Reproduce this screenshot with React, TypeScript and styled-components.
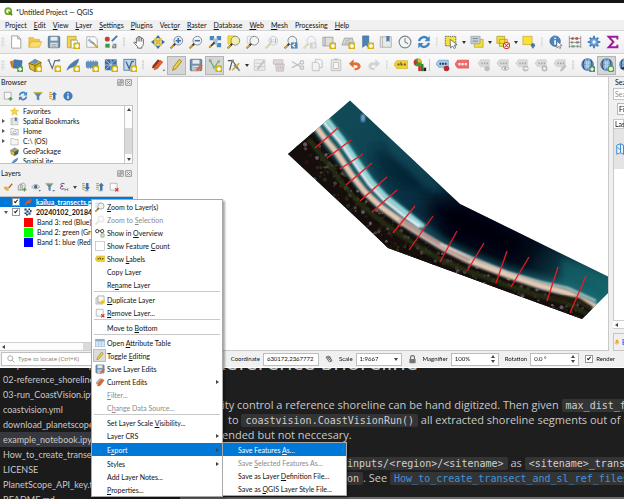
import React from 'react';
import styled, { createGlobalStyle, css } from 'styled-components';

const GlobalStyle = createGlobalStyle`
  *, *::before, *::after { box-sizing: border-box; }
  body { margin: 0; background: #1e1e1e; }
  button, input, select { font: inherit; color: inherit; margin: 0; }
`;

const ui = '"Lato", "Open Sans", sans-serif';
const prose = '"Open Sans", "Noto Sans", sans-serif';
const mono = '"DejaVu Sans Mono", monospace';

/* ---------- icons ---------- */

const Plus = ({ x = 9, y = 9 }: { x?: number; y?: number }) => (
  <g>
    <rect x={x} y={y} width="7" height="7" rx="1" fill="#e3c51c" stroke="#b2920c" strokeWidth=".7" />
    <path d={`M${x + 3.5} ${y + 1.2}v4.6M${x + 1.2} ${y + 3.5}h4.6`} stroke="#fff" strokeWidth="1.7" />
  </g>
);
const Lens = ({ fill = '#eef3f5', stroke = '#7a8288', handle = '#3a3325' }) => (
  <g>
    <path d="M6 10L1.500 14.500" stroke={handle} strokeWidth="2.200" strokeLinecap="round" />
    <path d="M3.500 12.500L1.500 14.500" stroke="#dcae2a" strokeWidth="2" strokeLinecap="round" />
    <circle cx="9.500" cy="6.500" r="5" fill={fill} stroke={stroke} strokeWidth="1" />
  </g>
);
const GreyTag = ({ children }: { children?: React.ReactNode }) => (
  <g>
    <path d="M1 6l3-4h10v8H4z" fill="#dadad8" stroke="#c6c6c4" strokeWidth=".6" />
    <path d="M5 6h1.600M8 6h1.600M11 6h1.600" stroke="#a4a4a4" strokeWidth="2" />
    {children}
  </g>
);
const Globe = () => (
  <g>
    <circle cx="7.500" cy="7.500" r="6.700" fill="#7fb0de" stroke="#3d6ea5" strokeWidth=".9" />
    <path d="M4 1.800Q1 7.500 4 13.200M11 1.800Q14 7.500 11 13.200" stroke="#3c4f66" fill="none" strokeWidth="1.300" />
    <path d="M7.500 1v13M1 7.500h13" stroke="#587fa8" fill="none" strokeWidth=".7" />
    <path d="M5.500 3.500h4v8h-4z" fill="#d9e6f2" opacity=".6" />
  </g>
);
const Pencil = ({ c = '#f0d338', e = '#8c7a20' }) => (
  <path d="M3 14l1-3.800L10.500 1.800l2.800 1.900-6.600 8.500z" fill={c} stroke={e} strokeWidth=".9" />
);
const Floppy = () => (
  <g>
    <rect x="1.500" y="1.500" width="13" height="13" rx="1.200" fill="#6f93b8" stroke="#4b6985" />
    <rect x="4" y="2" width="8" height="4.500" fill="#e8eaec" />
    <rect x="3.500" y="8.500" width="9" height="6" fill="#dfe3e6" stroke="#7c8894" strokeWidth=".5" />
    <path d="M5 11h6M5 12.800h6" stroke="#7c8894" strokeWidth=".8" />
  </g>
);
const Bars = ({ up = true }) => (
  <g>
    <path d="M2 2.500h4M2 5.500h4M2 8.500h4M2 11.500h4" stroke="#dc9a2b" strokeWidth="1.800" />
    <path d="M6 14h6" stroke="#7f8c98" strokeWidth="1.500" />
    {up ? <path d="M10 1l4.500 5H12v7H8V6H5.500z" fill="#3a76b0" /> : <path d="M10 13.500l4.500-5H12v-7H8v7H5.500z" fill="#3a76b0" />}
  </g>
);
const Refresh = () => (
  <g fill="none" stroke="#3f83c4" strokeWidth="2.700">
    <path d="M2.500 7A5.500 5.500 0 0 1 12 4.200" />
    <path d="M13.500 9A5.500 5.500 0 0 1 4 11.800" />
    <path d="M14.500 1v6h-6zM1.500 15V9h6z" fill="#3f83c4" stroke="none" />
  </g>
);

const icons: Record<string, React.ReactNode> = {
  logo: (
    <g>
      <circle cx="7.500" cy="7.500" r="5.300" fill="none" stroke="#6ea92f" strokeWidth="3.200" />
      <path d="M7.500 7.500l7 7" stroke="#4f8a25" strokeWidth="3" />
      <path d="M7 7h4L8 11z" fill="#f0b429" />
    </g>
  ),
  newFile: <path d="M3 1h7l3.500 3.500V15H3zM10 1v3.500h3.500" fill="#fff" stroke="#9a9a9a" strokeWidth="1" />,
  open: (
    <g stroke="#d9a521" strokeWidth=".7">
      <path d="M1 14V3h5l1.500 2H13v3" fill="#f2c84b" />
      <path d="M1 14L3.500 7.500H15.500L13 14z" fill="#fbdc6e" />
    </g>
  ),
  save: <Floppy />,
  newLayout: (
    <g>
      <path d="M1.500 1.500h10v4h-6v9h-4z" fill="#f3d64a" stroke="#b59a26" strokeWidth=".8" />
      <path d="M6 6h7v9H6z" fill="#fff" stroke="#9a9a9a" strokeWidth=".8" />
      <Plus />
    </g>
  ),
  layoutManager: (
    <g>
      <path d="M2 2h9l3 3v9H2z" fill="#fafafa" stroke="#9a9a9a" strokeWidth=".8" />
      <path d="M4 5l4 4" stroke="#9cb7cf" strokeWidth="3" />
      <path d="M8 8l6.500 6.500" stroke="#7c8790" strokeWidth="2" />
      <path d="M10 10l4 4" stroke="#e1b52a" strokeWidth="1.600" />
    </g>
  ),
  style: (
    <g>
      <rect x="1" y="2" width="5.500" height="5.500" rx="2" fill="#c63f2d" />
      <path d="M9 7L15 1" stroke="#3f79b8" strokeWidth="2.200" />
      <path d="M1.500 14.500v-4.500h5v4.500z" fill="#3c9a4c" />
      <path d="M10 10.500h3.500v4.500M13.500 12.500H10v2h3.500" stroke="#777" fill="none" strokeWidth="1.200" />
    </g>
  ),
  hand: (
    <path
      d="M5 9V3.500q1-1.300 2 0V2q1-1.400 2 0v1q1-1.300 2 0v1.200q1.600-1 2 .6V10q-.4 2.800-1.800 3.500V15H6.500v-1.500L2 8.600q.8-1.800 3 .9zM7 3.500V7.500M9 3V7.500M11 4V7.500"
      fill="#fff"
      stroke="#4a4a4a"
      strokeWidth=".9"
    />
  ),
  pan: (
    <g>
      <path d="M8 0l3 3.800H5zM8 16l3-3.800H5zM0 8l3.800-3v6zM16 8l-3.800-3v6z" fill="#3f72a8" />
      <path d="M4 4h3v3H4zM9 4h3v3H9zM4 9h3v3H4zM9 9h3v3H9zM6.500 6.500h3v3h-3z" fill="#f0cf2c" stroke="#b79a1c" strokeWidth=".5" />
    </g>
  ),
  zoomIn: (
    <g>
      <Lens fill="#dfeaf5" />
      <path d="M9.500 3.500v6M6.500 6.500h6" stroke="#3d6fa8" strokeWidth="1.700" />
    </g>
  ),
  zoomOut: (
    <g>
      <Lens />
      <path d="M6.500 6.500h6" stroke="#3d6fa8" strokeWidth="1.700" />
    </g>
  ),
  zoomFull: (
    <g>
      <path d="M2 1h5v5H2zM10 1h5v5h-5zM10 9h5v5h-5z" fill="#4f86b8" />
      <path d="M6 4h5v7H6z" fill="#a5c3de" />
      <path d="M7.500 8.500L1.500 14.500" stroke="#453c24" strokeWidth="2" />
      <path d="M3.500 12.500l-2 2" stroke="#dcae2a" strokeWidth="2" />
    </g>
  ),
  zoomSelection: (
    <g>
      <path d="M1 1h9v9H1z" fill="#f6df3c" stroke="#cbb11e" strokeWidth=".7" />
      <Lens fill="#f5eeb0" />
    </g>
  ),
  zoomLayer: (
    <g>
      <path d="M1.500 1.500h8v8h-8z" fill="#f7f7f7" stroke="#b8b8b8" strokeWidth=".7" />
      <Lens fill="#f3f3f0" />
    </g>
  ),
  zoomNative: (
    <g opacity=".4">
      <Lens handle="#8b8b8b" />
      <path d="M7 4v5M12 4v5M9.500 5v1M9.500 7.500v1" stroke="#555" strokeWidth="1.300" />
    </g>
  ),
  zoomLast: (
    <g>
      <Lens />
      <rect x="8" y="8.500" width="7.500" height="7" fill="#4d88bd" />
      <path d="M12.500 10l-2.500 2 2.500 2" stroke="#fff" strokeWidth="1.300" fill="none" />
    </g>
  ),
  zoomNext: (
    <g opacity=".35">
      <Lens handle="#8b8b8b" />
      <rect x="8" y="8.500" width="7.500" height="7" fill="#9a9a9a" />
      <path d="M11 10l2.500 2-2.500 2" stroke="#fff" strokeWidth="1.300" fill="none" />
    </g>
  ),
  newMap: (
    <g>
      <path d="M1 2.500h11.500v10H1z" fill="#dededc" stroke="#8e8e8c" strokeWidth=".8" />
      <path d="M3.500 2.500v10" stroke="#9a9a98" />
      <Plus />
    </g>
  ),
  new3d: (
    <g>
      <path d="M4 3.500h9l2 8H1z" fill="#d4d6d6" stroke="#929494" strokeWidth=".8" />
      <path d="M5 7l6-2M4 10l8-2" stroke="#a5b0b5" />
      <Plus />
    </g>
  ),
  bookmark: (
    <g>
      <path d="M3 1h7v13l-3.500-2.500L3 14z" fill="#4d83b8" stroke="#38658f" strokeWidth=".7" />
      <Plus />
    </g>
  ),
  bookmarks: (
    <g>
      <path d="M1.500 2h12.500v12H1.500z" fill="#e9e9e7" stroke="#a5a5a5" strokeWidth=".9" />
      <path d="M4 2v12" stroke="#b4b4b4" />
      <path d="M8.500 1h3.500v7l-1.700-1.500L8.500 8z" fill="#4878a8" />
    </g>
  ),
  clock: (
    <g fill="none" stroke="#7b858b">
      <circle cx="8" cy="8" r="6.700" fill="#f2f5f6" strokeWidth="1.300" />
      <path d="M8 3.500V8l3.500 2" strokeWidth="1.200" />
    </g>
  ),
  refresh: <Refresh />,
  select: (
    <g>
      <path d="M1.500 1.500h12v11h-12z" fill="#f5df3a" stroke="#555" strokeDasharray="1.500 1" />
      <path d="M7 5l8 6-3.300.6 1.500 3-1.700.9-1.600-3L7.500 15z" fill="#fff" stroke="#555" strokeWidth=".8" />
    </g>
  ),
  selectValue: (
    <g>
      <path d="M5 5h10v9H5z" fill="#f5df3a" stroke="#a8952a" strokeWidth=".7" />
      <path d="M1 1.500h10.500v8.500H1z" fill="#c6ced6" stroke="#8b949c" strokeWidth=".7" />
      <path d="M3 4h6M3 7h6" stroke="#77818a" />
    </g>
  ),
  deselect: (
    <g>
      <path d="M1 1.500h9v8H1zM4 5h9v8H4z" fill="#f5df3a" stroke="#a8952a" strokeWidth=".8" />
      <circle cx="12" cy="12" r="3.500" fill="#fff" stroke="#d6322c" strokeWidth="1.200" />
      <path d="M10 10l4 4M14 10l-4 4" stroke="#d6322c" strokeWidth="1.200" />
    </g>
  ),
  selectLocation: (
    <g>
      <path d="M1 1.500h10.500v9.500H1z" fill="#f8e23a" stroke="#c2a81f" strokeWidth=".8" />
      <path d="M12.500 16l-2.500-4q0-3 2.500-3t2.500 3z" fill="#47789f" />
    </g>
  ),
  identify: (
    <g>
      <circle cx="7" cy="7" r="6" fill="#4a86c0" stroke="#2f608f" strokeWidth=".7" />
      <path d="M7 3v1.700M7 6v5" stroke="#fff" strokeWidth="1.900" />
      <path d="M9 7l6 5-2.700.4 1.200 2.500-1.300.6-1.200-2.500L9 15z" fill="#fff" stroke="#555" strokeWidth=".7" />
    </g>
  ),
  abacus: (
    <g>
      <path d="M1.500 1v14M14.500 1v14M1 4h14M1 8.500h14M1 13h14" stroke="#9a9a9a" fill="none" strokeWidth="1.100" />
      <path d="M4 4h2.500M8.500 4h3" stroke="#c9483c" strokeWidth="3" />
      <path d="M3.500 8.500h2M9 8.500h3.500" stroke="#888" strokeWidth="2.500" />
      <path d="M4 13h3.500M10 13h2" stroke="#6aa878" strokeWidth="2.500" />
    </g>
  ),
  gear: (
    <g>
      <path d="M8 .8v14.400M.8 8h14.400M3 3l10 10M13 3L3 13" stroke="#4b88c4" strokeWidth="2.300" />
      <circle cx="8" cy="8" r="4.600" fill="#6aa0d6" stroke="#3f7ab5" />
      <circle cx="8" cy="8" r="1.900" fill="#f5f5f5" />
    </g>
  ),
  sigma: <path d="M13 5V2H3l5.500 6L3 14h10v-3" fill="none" stroke="#a0189c" strokeWidth="2.200" />,
  dataSource: (
    <g>
      <path d="M1 4l7-2 2 7-7 2z" fill="#d4682c" />
      <path d="M4 3h8v9H4z" fill="#d9a52c" />
      <path d="M6 2l9 1-1 9-9-1z" fill="#3f78b6" stroke="#2c5b8d" strokeWidth=".6" />
      <rect x="9.500" y="9.500" width="6.500" height="6.500" rx="1" fill="#4e9a4e" />
      <path d="M12.700 10.500v4.500M10.500 12.700H15" stroke="#fff" strokeWidth="1.500" />
    </g>
  ),
  geopackage: (
    <g>
      <path d="M1 6l7-4.500L15 5l-1 7-6 3.500-6-3z" fill="#e4be28" stroke="#3a3a30" strokeWidth=".6" />
      <path d="M8 8.500L15 5l-1 7-6 3.500z" fill="#2f5f91" />
      <path d="M3 5.500L8 2l4.500 2L8 7z" fill="#6fa0d0" />
      <path d="M1 6l7 2.500V15.500" stroke="#5c4c10" fill="none" strokeWidth=".9" />
    </g>
  ),
  newGeopackage: (
    <g>
      <path d="M1 6l7-4.500L15 5l-1 7-6 3.500-6-3z" fill="#e4be28" stroke="#3a3a30" strokeWidth=".6" />
      <path d="M3 5.500L8 2l4.500 2L8 7z" fill="#5d93c7" />
      <path d="M1 6l7 2.500V15.500M8 8.500L15 5" stroke="#5c4c10" fill="none" strokeWidth=".9" />
      <Plus />
    </g>
  ),
  newShape: (
    <g>
      <path d="M2 2.500L6 12 9 3h4.500" fill="none" stroke="#5c6a76" strokeWidth="1.300" />
      <path d="M.8 1.300h2.600v2.600H.8zM12.500 1.500h2.500v2.500h-2.500z" fill="#6d8fae" />
      <Plus />
    </g>
  ),
  feather: (
    <g>
      <path d="M1 15Q3 6 14.500 1 14 9 4.500 11.500z" fill="#4a7fb5" />
      <path d="M1 15L11 4.500" stroke="#b7d0e8" strokeWidth=".7" />
    </g>
  ),
  newSpatialite: (
    <g>
      <path d="M1 14Q3 6 14.500 1 14 9 4.500 11.500z" fill="#4a7fb5" stroke="#355f8b" strokeWidth=".5" />
      <Plus />
    </g>
  ),
  newScratch: (
    <g>
      <path d="M3.500 2.500v10M6.500 2.500v10M9.500 2.500v10M12.500 2.500v10" stroke="#7f99b3" strokeWidth="1.200" />
      <rect x="1" y="4" width="14" height="7" rx="1" fill="#5f90bf" />
      <Plus />
    </g>
  ),
  newMesh: (
    <g>
      <rect x="1" y="1.500" width="13.500" height="12.500" fill="#3e6fa3" />
      <path d="M1 8h13M8 1.500V14M1 14L14 1.500M1 1.500l7 6.500" stroke="#c5d8ea" strokeWidth=".9" />
      <Plus />
    </g>
  ),
  newVirtual: (
    <g>
      <rect x="1" y="1.500" width="13.500" height="12.500" fill="#c3d8ea" stroke="#4f7ba6" />
      <path d="M3.500 4L7 12l3-8h2.500" fill="none" stroke="#3e6a96" strokeWidth="1.500" />
      <Plus />
    </g>
  ),
  edits: (
    <g>
      <path d="M1 12l1-3.500 6-7 2.500 1.800-6 7.500z" fill="#8f2f1c" />
      <path d="M3.500 13.500l1-4 6-7 3 2-6 7.500z" fill="#e2642e" stroke="#9c3d1a" strokeWidth=".6" />
      <path d="M13.500 13.500h2.500l-1.200 1.700z" fill="#444" />
    </g>
  ),
  pencil: <Pencil />,
  saveEdits: (
    <g>
      <Floppy />
      <path d="M8 15l1-3 4.500-5 2.300 1.500L11.500 14z" fill="#e2642e" />
    </g>
  ),
  addFeature: (
    <g>
      <path d="M2.500 3L7 11l5-7" fill="none" stroke="#6aa36e" strokeWidth="1.200" />
      <path d="M1 1.500h3v3H1zM11 2.500h2.500V5H11zM5.500 9.500h2.500V12H5.500z" fill="#79b57c" />
      <Plus />
    </g>
  ),
  vertex: (
    <g>
      <path d="M1 3h7M3 14L6 3l7 9" fill="none" stroke="#4f4f4f" strokeWidth="1.200" />
      <path d="M5 2h3v3H5z" fill="#888" />
      <path d="M6 14l8-8" stroke="#dba92a" strokeWidth="2" />
      <path d="M8 8l6.500 6.500" stroke="#7c8790" strokeWidth="1.800" />
    </g>
  ),
  modify: (
    <g opacity=".4">
      <path d="M1.500 2h12v12h-12zM1.500 6h12M1.500 10h12" fill="#e3e3e1" stroke="#8c8c8c" />
      <path d="M5 13L13 3" stroke="#777" strokeWidth="2" />
    </g>
  ),
  trash: (
    <g opacity=".5" fill="#cbbcbc" stroke="#8f7f7f" strokeWidth=".9">
      <path d="M1.500 2h11v5h-11zM4 7h10l-1 8H5z" />
      <path d="M7 9v4M9.500 9v4M12 9v4" />
    </g>
  ),
  cut: (
    <g opacity=".5" fill="none" stroke="#8d8d8d" strokeWidth="1.500">
      <path d="M1 4l10 6M1 11l10-5" />
      <circle cx="12.500" cy="5" r="1.900" />
      <circle cx="12.500" cy="11" r="1.900" />
    </g>
  ),
  copy: (
    <g opacity=".5" fill="#f3f3f3" stroke="#8d8d8d">
      <path d="M6 1.500h6l2 2V11H6z" />
      <path d="M2.500 5h6l2 2v7.500h-8z" />
    </g>
  ),
  paste: (
    <g opacity=".5" stroke="#8d8d8d">
      <path d="M2.500 2h11v12.500h-11z" fill="#e0e0e0" />
      <path d="M5 5h6v7H5z" fill="#fafafa" />
      <path d="M6 1.500h4" strokeWidth="2" />
    </g>
  ),
  undo: <path d="M1 6.500L6.500 1.500V5Q14 4.500 14.500 9.500 14 14 7.500 14V11.500Q11.500 11.500 11 9.300 10.500 7.700 6.500 8V11.500z" fill="#e0703a" />,
  redo: <path d="M15 6.500L9.500 1.500V5Q2 4.500 1.500 9.500 2 14 8.500 14V11.500Q4.500 11.500 5 9.300 5.500 7.700 9.500 8V11.500z" fill="#cfd4d1" />,
  label: (
    <g>
      <path d="M0 7.500l3-4.500h12.500v9H3z" fill="#f2d22e" stroke="#c0a11b" strokeWidth=".6" />
      <path d="M4 7.500h2.300M7.500 7.500h2.300M11.200 7.500h2.300" stroke="#6b5f24" strokeWidth="2.400" />
      <path d="M7.800 4.500v3" stroke="#6b5f24" />
    </g>
  ),
  diagram: (
    <g>
      <circle cx="5.500" cy="5" r="4.500" fill="#3b9a3a" />
      <path d="M5.500 5V.5A4.500 4.500 0 0 1 10 5z" fill="#e0bb21" />
      <path d="M5.500 5L2 8A4.500 4.500 0 0 1 2 2z" fill="#c9302a" />
      <path d="M6 9h3v6H6z" fill="#c9302a" />
      <path d="M9 7h3v8H9z" fill="#2e7d34" />
      <path d="M12 11h3v4h-3z" fill="#222" />
    </g>
  ),
  labelPin: (
    <g>
      <path d="M0 6.500l3-4h11v8H3z" fill="#a8cbf0" stroke="#5f93c9" strokeWidth=".8" />
      <path d="M4 6.500h2M7 6.500h2M10 6.500h2" stroke="#333" strokeWidth="2.300" />
      <circle cx="12" cy="12" r="3.200" fill="#b52b2b" />
    </g>
  ),
  labelRed: (
    <g>
      <path d="M0 7l3-4.500h12.500v9H3z" fill="#f26a6a" stroke="#e04848" strokeWidth=".8" />
      <path d="M4 7h2.300M7.500 7h2.300M11.200 7h2.300" stroke="#fff" strokeWidth="2.400" />
    </g>
  ),
  tagPin: <GreyTag><circle cx="11.500" cy="12" r="3" fill="#c4bcbc" /></GreyTag>,
  tagEye: <GreyTag><path d="M6 12q4.500-4.500 9 0-4.500 4-9 0z" fill="#f4f4f4" stroke="#aaa" /><circle cx="10.500" cy="12" r="1.300" fill="#999" /></GreyTag>,
  tagMove: <GreyTag><circle cx="12" cy="12" r="3.500" fill="#c0c0c0" /><path d="M10 12h4M12.500 10.500L14 12l-1.500 1.500" stroke="#fff" fill="none" /></GreyTag>,
  tagRotate: <GreyTag><circle cx="12" cy="12" r="2.600" fill="#eee" stroke="#b8b8b8" strokeWidth="1.600" /></GreyTag>,
  tagEdit: <GreyTag><path d="M8.500 15l.8-2.600L13 8l2 1.500L11 14z" fill="#c4c4c0" stroke="#aaa" strokeWidth=".5" /></GreyTag>,
  globePlus: (
    <g>
      <Globe />
      <rect x="9.500" y="9.500" width="6.500" height="6.500" rx="1" fill="#46885a" />
      <path d="M12.700 10.500v4.500M10.500 12.700H15" stroke="#fff" strokeWidth="1.500" />
    </g>
  ),
  globeSearch: (
    <g>
      <Globe />
      <circle cx="12.500" cy="12.500" r="3.200" fill="#e8f2e4" stroke="#5a9a50" strokeWidth="1.500" />
    </g>
  ),
  globeDark: <g><Globe /><path d="M1 12l7-3 6 5z" fill="#20303f" /></g>,
  addLayer: (
    <g>
      <path d="M2 2h11v11H2z" fill="#f6f6f6" stroke="#8d8d8d" />
      <path d="M12 9.500v6M9 12.500h6" stroke="#4f9a54" strokeWidth="2.300" />
    </g>
  ),
  filter: (
    <g>
      <path d="M1 2h14L10 8.500V15l-4-1.500V8.500z" fill="#5a88b0" />
      <path d="M1 1.500h14v2.300H1z" fill="#d0b53a" />
    </g>
  ),
  collapse: <Bars />,
  expand: <Bars up={false} />,
  info: (
    <g>
      <circle cx="8" cy="8" r="6.800" fill="#3f7fbd" stroke="#2d6397" strokeWidth=".8" />
      <path d="M8 3.500v2M8 7v5.500" stroke="#fff" strokeWidth="2.200" />
    </g>
  ),
  star: <path d="M8 .8l2.100 5H15.400l-4.200 3.400 1.600 5.400L8 11.400l-4.800 3.200 1.600-5.400L.6 5.800h5.300z" fill="#fbd83b" stroke="#d9a91e" strokeWidth=".8" />,
  homeFolder: (
    <g fill="#f6f6f6" stroke="#8d8d8d">
      <path d="M1.500 14V2.500h5L8 4.500h6.500V14z" />
      <path d="M5 9.500L8 6.500l3 3V12H5z" fill="none" strokeWidth="1.200" />
    </g>
  ),
  folder: <path d="M1.500 14V2.500h5L8 4.500h6.500V14z" fill="#f6f6f6" stroke="#a2a2a2" />,
  brush: (
    <g>
      <path d="M8 9l6-7 1.500 1.500L10 10z" fill="#c05a28" />
      <path d="M1 8q5-2 7 1t1 5Q3 15 1 8z" fill="#e8b13a" />
    </g>
  ),
  addGroup: (
    <g>
      <path d="M2 13V6l4-3 3 2v8z" fill="#e2e2e0" stroke="#7d7d7d" />
      <path d="M6 13V4l4-2.500L13 4v7" fill="none" stroke="#7d7d7d" />
      <path d="M12 9v6M9 12h6" stroke="#4f9a54" strokeWidth="2" />
    </g>
  ),
  eye: (
    <g>
      <path d="M1 8q7-8 13 0-6 6-13 0z" fill="#e8eef2" stroke="#76828c" />
      <circle cx="7.500" cy="7.500" r="2.700" fill="#3d648a" />
      <path d="M12 13h4l-2 2.300z" fill="#444" />
    </g>
  ),
  filterDrop: (
    <g>
      <path d="M1 2h12L9 8v6.500l-3.500-1.500V8z" fill="#5a88b0" />
      <path d="M1 1.500h12v2.300H1z" fill="#d0b53a" />
      <path d="M12 13h4l-2 2.300z" fill="#444" />
    </g>
  ),
  expression: (
    <g>
      <path d="M9 3Q3 .5 3 4.500 3 6.500 6.500 6.500 2 6.500 2 9.500 3 13 8 10.800" fill="none" stroke="#7d4a86" strokeWidth="1.600" />
      <path d="M9.500 9.500v5M14 9.500v5M9.500 12H14" stroke="#7a7a7a" strokeWidth="1.200" fill="none" />
    </g>
  ),
  removeLayer: (
    <g>
      <path d="M2 2h11v11H2z" fill="#fafafa" stroke="#9a9a9a" />
      <path d="M10 10l5 5M15 10l-5 5" stroke="#d8342c" strokeWidth="2" />
    </g>
  ),
  duplicate: (
    <g>
      <path d="M4.500 1.500h10v10h-10z" fill="#fafafa" stroke="#8d8d8d" />
      <path d="M1.500 4.500h3v8h7v2h-10z" fill="#e8e8e8" stroke="#8d8d8d" strokeWidth=".8" />
      <path d="M12 8v7M8.500 11.500h7M9.500 9l5 5M14.500 9l-5 5" stroke="#e3c51c" strokeWidth="1.600" />
    </g>
  ),
  line: <path d="M2 14L14 2M4 12Q7 3 9 8T14 4" stroke="#e2572b" strokeWidth="2.300" fill="none" />,
  raster: (
    <g>
      <rect x="1" y="1" width="14" height="14" fill="#e4ebf2" />
      <path d="M1 1h4v4H1zM9 1h3v3H9zM5 5h4v4H5zM12 4h3v4h-3zM1 9h4v3H1zM9 9h4v4H9zM4 12h4v3H4z" fill="#24405c" />
    </g>
  ),
  overview: (
    <g>
      <circle cx="3.500" cy="5" r="2.600" fill="none" stroke="#333" strokeWidth="1.400" />
      <circle cx="11.500" cy="5" r="2.600" fill="none" stroke="#333" strokeWidth="1.400" />
      <path d="M6 4.500h3" stroke="#333" strokeWidth="1.300" />
      <path d="M9.500 9.500h5v5h-5z" fill="#e9f5e9" stroke="#4f9a54" />
    </g>
  ),
  zoomFaint: <g opacity=".35"><Lens handle="#999" /></g>,
  emptyBox: <rect x="1" y="1" width="14" height="14" fill="#fff" stroke="#b4b4b4" />,
  table: (
    <g>
      <rect x="1" y="2" width="14" height="12" fill="#f1f6fa" stroke="#8ab0d2" />
      <path d="M1 2h14v3.500H1z" fill="#7fa9cf" />
      <path d="M5.500 2v12M10 2v12M1 8h14M1 11h14" stroke="#9dbcd8" strokeWidth=".9" />
    </g>
  ),
  currentEdits: (
    <g>
      <path d="M1 12l1-4 6-6.500 3 1.800-6 8z" fill="#b4aca6" />
      <path d="M4 14.500l1-4 6-7.500 3.500 2-6 8.500z" fill="#e2642e" stroke="#9c3d1a" strokeWidth=".6" />
    </g>
  ),
  search: <path d="M10 10l4.500 4.500M6.500 1.500a5 5 0 1 1 0 10 5 5 0 0 1 0-10z" fill="none" stroke="#8a8a8a" strokeWidth="1.400" />,
  extents: (
    <g fill="none" stroke="#555" strokeWidth="1.600">
      <path d="M2 5l6-3 6 9-5 3z" />
      <path d="M3 2l10 11M5 7l6-3M7 10l5-3" />
    </g>
  ),
  lock: (
    <g>
      <path d="M4.500 7V4.500a3.500 3.500 0 0 1 7 0V7" fill="none" stroke="#6b6b6b" strokeWidth="2" />
      <rect x="2.500" y="7" width="11" height="7.500" rx="1" fill="#777" />
    </g>
  ),
  float: <path d="M1.500 1.500h13v13h-13zM4 12V7h5v5zM7 7V4h5v5H9" fill="#eee" stroke="#777" strokeWidth="1.500" />,
  close: <path d="M1.500 1.500h13v13h-13zM4.500 4.500l7 7M11.500 4.500l-7 7" fill="#eee" stroke="#777" strokeWidth="1.700" />,
  mapItem: (
    <g fill="#e8f1fa" stroke="#3d8bd0" strokeWidth="1.300">
      <path d="M1 3l5-2 4 2 5-2v12l-5 2-4-2-5 2z" />
      <path d="M6 1v12M10 3v12M2 6l4 3M10 6l5 3" fill="none" />
    </g>
  ),
  bell: <path d="M2 12q2-2 2-5 0-5 4-5.500 4 .5 4 5.500 0 3 2 5zM6 13h4l-2 2.500z" fill="#f5a623" />,
};

const Svg = styled.svg<{ $size: number }>`
  display: block;
  flex: none;
  width: ${(p) => p.$size}px;
  height: ${(p) => p.$size}px;
`;
const Icon = ({ name, size = 14 }: { name: string; size?: number }) => (
  <Svg $size={size} viewBox="0 0 16 16" aria-hidden="true">
    {icons[name]}
  </Svg>
);

/* ---------- shell ---------- */

const Desktop = styled.div`
  display: flex;
  flex-direction: column;
  height: 100vh;
  min-height: 420px;
  overflow: hidden;
`;
const Qgis = styled.div`
  flex: 1;
  min-height: 0;
  display: flex;
  flex-direction: column;
  position: relative;
  background: #f0f0f0;
  border-top: 3px solid #141414;
  font: 7px/10px ${ui};
  color: #111;
`;
const TitleBar = styled.header`
  display: flex;
  align-items: center;
  gap: 3px;
  height: 17px;
  padding: 0 4px;
  background: #fff;
`;
const Title = styled.h1`
  margin: 0;
  font: 400 7px/12px ${ui};
`;
const MenuBar = styled.nav`
  display: flex;
  gap: 7px;
  height: 10px;
  padding: 0 5px;
`;
const MenuButton = styled.button`
  border: 0;
  padding: 0;
  background: none;
  white-space: nowrap;
`;
const Toolbar = styled.div`
  display: flex;
  align-items: center;
  height: 23px;
  overflow: hidden;
  background: linear-gradient(#fbfbfb, #ededed);
  border-top: 1px solid #d4d4d4;
`;
const ToolButton = styled.button<{ $on?: boolean }>`
  flex: none;
  display: flex;
  align-items: center;
  justify-content: center;
  width: 19px;
  height: 19px;
  padding: 0;
  border: 1px solid ${(p) => (p.$on ? '#b4b4b4' : 'transparent')};
  background: ${(p) => (p.$on ? '#d6d6d6' : 'none')};
`;
const DropArrow = styled.span`
  flex: none;
  width: 7px;
  display: flex;
  justify-content: center;
  &::before {
    content: '';
    border: 2px solid transparent;
    border-top: 3px solid #333;
    border-bottom: 0;
  }
`;
const Grip = styled.span<{ $w: number }>`
  flex: none;
  width: ${(p) => p.$w}px;
  height: 10px;
  background: radial-gradient(circle at 1px 1px, #d4d4d4 1px, transparent 1px) center / 3px 3px;
  background-clip: content-box;
  padding: 0 ${(p) => (p.$w > 6 ? 3 : 1)}px;
`;
const Divider = styled.span<{ $line?: boolean }>`
  flex: none;
  width: ${(p) => (p.$line ? 4 : 3)}px;
  height: 12px;
  border-left: 1px solid ${(p) => (p.$line ? '#c8c8c8' : 'transparent')};
`;

const Body = styled.div`
  flex: 1;
  min-height: 0;
  display: flex;
  border-top: 1px solid #c6c6c6;
`;
const LeftDock = styled.aside`
  flex: none;
  width: 138px;
  display: flex;
  flex-direction: column;
  padding-right: 4px;
  border-right: 1px solid #d2d2d2;
`;
const DockTitle = styled.div`
  display: flex;
  align-items: center;
  height: 10px;
  padding: 0 1px;
  gap: 1px;
`;
const DockName = styled.h2`
  flex: 1;
  margin: 0;
  font-size: 7px;
  font-weight: 400;
`;
const PlainButton = styled.button`
  flex: none;
  display: flex;
  padding: 0;
  border: 0;
  background: none;
`;
const DockTools = styled.div<{ $gap: number }>`
  display: flex;
  align-items: center;
  gap: ${(p) => p.$gap}px;
  height: 18px;
  padding: 0 3px;
`;
const BrowserBox = styled.div`
  flex: none;
  display: flex;
  height: 59px;
  overflow: hidden;
  background: #fff;
  border: 1px solid #c4c4c4;
  border-left: 0;
`;
const Tree = styled.ul`
  flex: 1;
  min-width: 0;
  margin: 0;
  padding: 0;
  list-style: none;
`;
const TreeRow = styled.li`
  display: flex;
  align-items: center;
  gap: 4px;
  height: 10px;
  padding-left: 1px;
  white-space: nowrap;
  font-size: 7px;
`;
const Twist = styled.span<{ $kind?: 'open' | 'closed' }>`
  flex: none;
  width: 5px;
  display: flex;
  justify-content: center;
  &::before {
    content: '';
    ${(p) => p.$kind === 'closed' && css`border: 2px solid transparent; border-left: 3px solid #555; border-right: 0;`}
    ${(p) => p.$kind === 'open' && css`border: 2px solid transparent; border-top: 3px solid #555; border-bottom: 0;`}
  }
`;
const ScrollBar = styled.div`
  flex: none;
  width: 8px;
  display: flex;
  flex-direction: column;
  align-items: center;
  justify-content: space-between;
  padding: 2px 0;
  background: linear-gradient(#fcfcfc 22px, #d9d9d9 22px, #d9d9d9 48px, #fcfcfc 48px);
  border-left: 1px solid #c9c9c9;
`;
const Tri = styled.span<{ $dir: 'up' | 'down' | 'left' | 'right' }>`
  border: 2px solid transparent;
  ${(p) => p.$dir === 'up' && 'border-bottom: 3px solid #444; border-top: 0;'}
  ${(p) => p.$dir === 'down' && 'border-top: 3px solid #444; border-bottom: 0;'}
  ${(p) => p.$dir === 'left' && 'border-right: 3px solid #444; border-left: 0;'}
  ${(p) => p.$dir === 'right' && 'border-left: 3px solid #444; border-right: 0;'}
`;
const Splitter = styled.div`
  flex: none;
  height: 4px;
`;
const LayerBox = styled.div`
  flex: 1;
  min-height: 0;
  overflow: hidden;
  background: #fff;
  border-top: 1px solid #c4c4c4;
`;
const LayerRow = styled.li<{ $selected?: boolean; $bold?: boolean }>`
  display: flex;
  align-items: center;
  gap: 4px;
  height: 10px;
  padding-left: 3px;
  overflow: hidden;
  white-space: nowrap;
  font-weight: ${(p) => (p.$selected || p.$bold ? 700 : 400)};
  color: ${(p) => (p.$selected ? '#fff' : '#111')};
  text-decoration: ${(p) => (p.$selected ? 'underline' : 'none')};
  background: ${(p) => (p.$selected ? '#0078d7' : 'none')};
`;
const BandRow = styled(LayerRow)`
  padding-left: 24px;
`;
const Swatch = styled.span<{ $color: string }>`
  flex: none;
  width: 9px;
  height: 9px;
  background: ${(p) => p.$color};
`;
const Check = styled.input.attrs({ type: 'checkbox' })`
  appearance: none;
  flex: none;
  position: relative;
  width: 8px;
  height: 8px;
  border: 1px solid #999;
  background: #fff;
  &:checked::after {
    content: '';
    position: absolute;
    left: 2px;
    top: 0;
    width: 2px;
    height: 4px;
    border: solid #111;
    border-width: 0 1px 1px 0;
    transform: rotate(40deg);
  }
`;
const HScroll = styled.div`
  flex: none;
  display: flex;
  align-items: center;
  height: 9px;
  padding-left: 2px;
  background: linear-gradient(90deg, #fcfcfc 83px, #dadada 83px);
  border: solid #cfcfcf;
  border-width: 1px 0;
`;
const MapCanvas = styled.main`
  flex: 1;
  min-width: 0;
  overflow: hidden;
  background: #fff;
  border: solid #c9c9c9;
  border-width: 0 1px 1px 0;
`;
const MapSvg = styled.svg`
  display: block;
  width: 100%;
  height: 100%;
`;
const RightDock = styled.aside`
  flex: none;
  width: 15px;
  display: flex;
  flex-direction: column;
  padding-left: 4px;
  overflow: hidden;
  white-space: nowrap;
`;
const RightTitle = styled.h2`
  margin: 0;
  height: 11px;
  padding-left: 2px;
  font: 400 7px/11px ${ui};
`;
const SearchInput = styled.input`
  flex: none;
  width: 60px;
  height: 12px;
  padding: 0 1px;
  border: 1px solid #c4c4c4;
  background: #fff;
  &::placeholder { color: #888; }
`;
const FilterButton = styled.button`
  flex: none;
  width: 40px;
  height: 12px;
  margin: 3px 0 4px 4px;
  padding: 0 1px;
  border: 1px solid #b8b8b8;
  background: #fafafa;
  text-align: left;
`;
const ResultHead = styled.div`
  flex: none;
  height: 10px;
  padding: 0 1px;
  background: #fff;
  border: 1px solid #c8c8c8;
  line-height: 8px;
`;
const ResultItem = styled.div`
  flex: none;
  display: flex;
  align-items: center;
  height: 40px;
  padding-left: 2px;
  background: #e4e4e4;
  border-left: 1px solid #c8c8c8;
`;
const ResultSpace = styled.div`
  flex: 1;
  background: #fff;
  border-left: 1px solid #c8c8c8;
`;
const Notice = styled.div`
  flex: none;
  display: flex;
  align-items: center;
  height: 18px;
  margin-top: 4px;
  gap: 2px;
  border: 1px solid #c4c4c4;
  border-right: 0;
  color: #5757ff;
  font-weight: 700;
`;

const StatusBar = styled.footer`
  flex: none;
  display: flex;
  align-items: center;
  height: 17px;
  padding: 0 9px 0 1px;
  border-bottom: 1px solid #fff;
  font: 6px/10px ${ui};
  white-space: nowrap;
`;
const Locator = styled.label`
  display: flex;
  align-items: center;
  gap: 3px;
  width: 160px;
  height: 14px;
  padding-left: 5px;
  background: #fff;
  border: 1px solid #c0c0c0;
  font-family: ${prose};
`;
const LocatorInput = styled.input`
  flex: 1;
  min-width: 0;
  border: 0;
  padding: 0;
  background: none;
  &::placeholder { color: #777; }
`;
const StatusField = styled.label<{ $grow?: boolean }>`
  display: flex;
  align-items: center;
  gap: 3px;
  margin-left: ${(p) => (p.$grow ? 'auto' : '6px')};
`;
const ValueBox = styled.span<{ $w: number }>`
  display: flex;
  align-items: center;
  width: ${(p) => p.$w}px;
  height: 13px;
  padding: 0 3px;
  background: #fff;
  border: 1px solid #bdbdbd;
`;
const ValueInput = styled.input`
  flex: 1;
  min-width: 0;
  border: 0;
  padding: 0;
  background: none;
`;
const ScaleSelect = styled.select`
  flex: 1;
  appearance: none;
  border: 0;
  padding: 0;
  background: none;
`;
const Spinner = styled.span`
  display: flex;
  flex-direction: column;
  gap: 2px;
`;

/* ---------- context menu ---------- */

const menuSurface = css`
  background: #fff;
  border: 1px solid #a8a8a8;
  box-shadow: 2px 2px 2px rgba(0, 0, 0, 0.35);
  margin: 0;
  padding: 0;
  list-style: none;
`;
const ContextMenu = styled.ul`
  ${menuSurface}
  position: absolute;
  z-index: 2;
  left: 91px;
  top: 196px;
  width: 132px;
`;
const SubMenu = styled.ul`
  ${menuSurface}
  position: absolute;
  left: 100%;
  top: -1px;
  width: 125px;
`;
const MenuEntry = styled.li<{ $spaced?: boolean }>`
  position: relative;
  margin: ${(p) => (p.$spaced ? '1px 0' : '0')};
`;
const MenuItem = styled.button<{ $active?: boolean }>`
  display: grid;
  grid-template-columns: 15px 1fr 6px;
  align-items: center;
  width: 100%;
  height: 13px;
  padding: 0;
  border: 0;
  text-align: left;
  white-space: nowrap;
  color: ${(p) => (p.$active ? '#fff' : '#111')};
  background: ${(p) => (p.$active ? '#0078d7' : 'none')};
  &:disabled { color: #8a8a8a; }
`;
const IconCell = styled.span<{ $on?: boolean }>`
  display: flex;
  align-items: center;
  justify-content: center;
  height: 13px;
  width: 13px;
  margin-left: 1px;
  background: ${(p) => (p.$on ? '#dcdcdc' : 'none')};
  outline: ${(p) => (p.$on ? '1px solid #bdbdbd' : 'none')};
  outline-offset: -1px;
`;
const Rule = styled.li`
  height: 2px;
  margin: 0 2px;
  border-top: 1px solid #c9c9c9;
`;

const Mnemonic = ({ text }: { text: string }) => {
  const i = text.indexOf('&');
  if (i < 0) return <span>{text}</span>;
  return (
    <span>
      {text.slice(0, i)}
      <u>{text[i + 1]}</u>
      {text.slice(i + 2)}
    </span>
  );
};

type Entry = { text?: string; icon?: string; off?: boolean; sub?: boolean; on?: boolean; open?: boolean };
const entries: Entry[] = [
  { text: '&Zoom to Layer(s)', icon: 'zoomLayer' },
  { text: 'Zoom to &Selection', icon: 'zoomFaint', off: true },
  { text: 'Show in &Overview', icon: 'overview' },
  { text: 'Show Feature &Count', icon: 'emptyBox' },
  { text: 'Show &Labels', icon: 'label' },
  { text: 'Copy Layer' },
  { text: 'Re&name Layer' },
  {},
  { text: '&Duplicate Layer', icon: 'duplicate' },
  { text: '&Remove Layer...', icon: 'removeLayer' },
  {},
  { text: 'Move to &Bottom' },
  {},
  { text: 'Open &Attribute Table', icon: 'table' },
  { text: 'Toggle &Editing', icon: 'pencil', on: true },
  { text: 'Save Layer Edits', icon: 'saveEdits' },
  { text: 'Current Edits', icon: 'currentEdits', sub: true },
  { text: '&Filter...', off: true },
  { text: 'C&hange Data Source...', off: true },
  {},
  { text: 'Set Layer Scale &Visibility...' },
  { text: 'Layer CRS', sub: true },
  { text: 'E&xport', sub: true, open: true },
  { text: 'Styles', sub: true },
  { text: 'Add Layer Notes...' },
  { text: '&Properties...' },
];
const exportEntries: Entry[] = [
  { text: 'Save Features &As...', open: true },
  { text: 'Save &Selected Features As...', off: true },
  { text: 'Save as Layer &Definition File...' },
  { text: 'Save as &QGIS Layer Style File...' },
];

/* ---------- map ---------- */

const shore = 'M318 112L324 124L341 141L357 163L370 183L384 198L401 213L421 228L441 243L468 257L507 272L541 282L568 288L590 298L606 310';
const land = 'M310 128L324 146L341 168L356 188L374 206L397 222L418 238L441 251L468 264L507 278L541 290L568 296L598 312L590 330L380 330L270 160Z';
const transects = [
  [315, 148, 339, 127], [327, 158, 351, 140], [340, 169, 363, 154], [346, 185, 372, 163],
  [360, 201, 387, 177], [372, 212, 397, 190], [393, 233, 415, 206], [409, 250, 433, 216],
  [440, 262, 457, 231], [467, 271, 484, 243], [496, 283, 507, 251], [511, 287, 529, 257],
  [547, 301, 558, 267], [570, 313, 586, 276],
];
const landAxis = [[306, 142], [335, 172], [365, 205], [392, 232], [430, 256], [475, 272], [520, 289], [560, 304], [590, 314]];
const speckColors = ['#2c3a18', '#1a120c', '#3a2c20', '#5c5048', '#0c0805', '#2e3a1a', '#7c7088', '#2c1c14', '#1c0f0c', '#241812'];
const specks = Array.from({ length: 620 }, (_, i) => {
  const r = (k: number) => {
    const v = Math.sin(i * 12.9898 + k * 78.233) * 43758.5453;
    return v - Math.floor(v);
  };
  const t = r(1) * (landAxis.length - 1.01);
  const n = Math.floor(t);
  const f = t - n;
  const x = landAxis[n][0] + (landAxis[n + 1][0] - landAxis[n][0]) * f + (r(2) - 0.5) * 24;
  const y = landAxis[n][1] + (landAxis[n + 1][1] - landAxis[n][1]) * f + (r(3) - 0.5) * 34;
  return { x, y, s: 0.8 + r(4) * 1.3, c: speckColors[Math.floor(r(5) * speckColors.length)] };
});

const SatelliteMap = () => (
  <MapSvg viewBox="138 77 470 273" preserveAspectRatio="xMinYMin slice" role="img" aria-label="Satellite strip of Kailua beach with transects">
    <defs>
      <clipPath id="strip">
        <path d="M350 100.500L460 204L608 276.500V293L582 319L388 248L363 224L288 154Z" />
      </clipPath>
      <clipPath id="land">
        <path d={land} />
      </clipPath>
      <linearGradient id="sea" gradientUnits="userSpaceOnUse" x1="340" y1="100" x2="608" y2="290">
        <stop offset="0" stopColor="#124c57" />
        <stop offset=".22" stopColor="#0e4152" />
        <stop offset=".4" stopColor="#082a3e" />
        <stop offset=".52" stopColor="#020b1c" />
        <stop offset=".75" stopColor="#03101f" />
        <stop offset=".88" stopColor="#0f4650" />
        <stop offset="1" stopColor="#145f66" />
      </linearGradient>
      <filter id="b05"><feGaussianBlur stdDeviation=".5" /></filter>
      <filter id="b1"><feGaussianBlur stdDeviation="1" /></filter>
      <filter id="b3"><feGaussianBlur stdDeviation="3" /></filter>
      <filter id="b8"><feGaussianBlur stdDeviation="7" /></filter>
    </defs>
    <g clipPath="url(#strip)">
      <rect x="280" y="90" width="340" height="240" fill="url(#sea)" />
      <path d="M374 146L410 166L440 195L400 188L376 168Z" fill="#041a2c" opacity=".7" filter="url(#b8)" />
      <path d="M380 124L430 172L446 192L426 188L392 154Z" fill="#125463" opacity=".5" filter="url(#b3)" />
      <path d="M425 200L470 205L530 240L520 262L450 238Z" fill="#01040f" filter="url(#b8)" />
      <path d="M562 258L610 280V300L560 284Z" fill="#15686f" opacity=".6" filter="url(#b3)" />
      <path d={shore} fill="none" stroke="#237a86" strokeWidth="12" opacity=".5" filter="url(#b3)" />
      <path d={land} fill="#18110b" filter="url(#b1)" />
      <g clipPath="url(#land)" filter="url(#b05)">
        {specks.map((s, i) => (
          <circle key={i} cx={s.x} cy={s.y} r={s.s} fill={s.c} opacity=".75" />
        ))}
      </g>
      <path d="M308 139L325 160L342 183L358 202L377 218L399 234L421 248L441 260L468 271L503 284L537 295L566 302L596 319" fill="none" stroke="#283212" strokeWidth="5" opacity=".85" filter="url(#b1)" />
      <path d="M313 122L322 135L337 153L351 174L365 192L381 207L402 222L424 236L444 248L470 261L507 275L541 286L568 293L600 309" fill="none" stroke="#e6c8b2" strokeWidth="6" filter="url(#b1)" />
      <path d="M400 220L424 235L444 247L470 260" fill="none" stroke="#a98789" strokeWidth="4" opacity=".8" filter="url(#b1)" />
      <path d="M320 112L329 122L342 139L357 161L371 181L385 196L404 211L424 227" fill="none" stroke="#8fd6d8" strokeWidth="5" filter="url(#b1)" />
      <path d="M318 114L326 125L340 142L355 164L369 184L384 200L403 215L420 227" fill="none" stroke="#fff" strokeWidth="3" filter="url(#b1)" />
      <path d="M440 244L475 259L507 272L541 282L568 288L596 301" fill="none" stroke="#f0ece2" strokeWidth="2" opacity=".85" filter="url(#b1)" />
      <path d="M552 297L578 300L592 309" fill="none" stroke="#241a10" strokeWidth="5" filter="url(#b1)" />
      <ellipse cx="363" cy="118" rx="2" ry="4" fill="#7ea8e0" filter="url(#b1)" />
    </g>
    <g stroke="#e81c25" strokeWidth="1.300">
      {transects.map(([x1, y1, x2, y2]) => (
        <line key={x1} x1={x1} y1={y1} x2={x2} y2={y2} />
      ))}
    </g>
  </MapSvg>
);

/* ---------- editor behind ---------- */

const Editor = styled.div`
  flex: none;
  display: flex;
  height: 131px;
  overflow: hidden;
  background: #1e1e1e;
  color: #c8c8c8;
`;
const Files = styled.ul`
  flex: none;
  width: 180px;
  margin: 0;
  margin-top: -11px;
  padding: 0;
  list-style: none;
  background: #1b1b1c;
  font: 9px/15px ${ui};
`;
const FileRow = styled.li<{ $active?: boolean }>`
  height: 15px;
  padding-left: 3px;
  white-space: nowrap;
  background: ${(p) => (p.$active ? '#37373d' : 'none')};
`;
const Notebook = styled.article`
  flex: 1;
  min-width: 0;
  padding-left: 42px;
  border-bottom: 2px solid #6a6a6a;
  overflow: hidden;
  font: 11px/15px ${prose};
  white-space: nowrap;
`;
const Heading = styled.h2`
  margin: -19px 0 24px;
  font: 400 22px/24px ${prose};
  text-indent: -10px;
`;
const Para = styled.p`
  margin: 0 0 13px;
`;
const Line = styled.span<{ $indent?: number }>`
  display: block;
  height: 15px;
  padding-left: ${(p) => p.$indent || 0}px;
`;
const Code = styled.code`
  padding: 1px 4px;
  border-radius: 2px;
  background: #343434;
  color: #d0d0d0;
  font: 10px/12px ${mono};
`;
const CodeLink = styled.a`
  color: #3f94dc;
  text-decoration: none;
`;

const files = [
  '01-planet_download.ipynb', '02-reference_shoreline.ipynb', '03-run_CoastVision.ipynb', 'coastvision.yml',
  'download_planetscope.ipynb', 'example_notebook.ipynb', 'How_to_create_transect.md', 'LICENSE',
  'PlanetScope_API_key.txt', 'README.md',
];

/* ---------- toolbars ---------- */

const menus = ['Pro&ject', '&Edit', '&View', '&Layer', '&Settings', '&Plugins', 'Vect&or', '&Raster', '&Database', '&Web', '&Mesh', 'Pro&cessing', '&Help'];
const row1 = '#6 newFile open save newLayout layoutManager style #9 hand pan zoomIn zoomOut zoomFull zoomSelection zoomLayer zoomNative zoomLast zoomNext newMap new3d bookmark bookmarks clock refresh #8 select v selectValue v deselect v selectLocation #8 identify abacus gear sigma'.split(' ');
const row2 = '#6 dataSource newGeopackage newShape newSpatialite newScratch newMesh newVirtual #9 edits *pencil saveEdits *addFeature vertex v modify trash cut copy paste undo redo #8 label diagram | labelPin labelRed _ tagPin tagEye tagMove tagRotate tagEdit #9 globePlus *globeSearch globeDark'.split(' ');

const ToolRow = ({ items }: { items: string[] }) => (
  <Toolbar role="toolbar">
    {items.map((it, i) => {
      if (it[0] === '#') return <Grip key={i} $w={Number(it.slice(1))} />;
      if (it === 'v') return <DropArrow key={i} />;
      if (it === '|' || it === '_') return <Divider key={i} $line={it === '|'} />;
      const on = it[0] === '*';
      const name = on ? it.slice(1) : it;
      return (
        <ToolButton key={i} $on={on} aria-label={name}>
          <Icon name={name} />
        </ToolButton>
      );
    })}
  </Toolbar>
);

const DockHeader = ({ name }: { name: string }) => (
  <DockTitle>
    <DockName>{name}</DockName>
    <PlainButton aria-label={`Float ${name}`}><Icon name="float" size={7} /></PlainButton>
    <PlainButton aria-label={`Close ${name}`}><Icon name="close" size={7} /></PlainButton>
  </DockTitle>
);

const browserItems: [string, string, boolean][] = [
  ['star', 'Favorites', false], ['bookmarks', 'Spatial Bookmarks', true], ['homeFolder', 'Home', true],
  ['folder', 'C:\\ (OS)', true], ['geopackage', 'GeoPackage', false], ['feather', 'SpatiaLite', false],
];

export default function App() {
  return (
    <Desktop>
      <GlobalStyle />
      <Qgis>
        <TitleBar>
          <Icon name="logo" size={9} />
          <Title>*Untitled Project — QGIS</Title>
        </TitleBar>
        <MenuBar>
          {menus.map((m) => (
            <MenuButton key={m}><Mnemonic text={m} /></MenuButton>
          ))}
        </MenuBar>
        <ToolRow items={row1} />
        <ToolRow items={row2} />
        <Body>
          <LeftDock>
            <DockHeader name="Browser" />
            <DockTools $gap={5}>
              {['addLayer', 'refresh', 'filter', 'collapse', 'info'].map((n) => (
                <PlainButton key={n} aria-label={n}><Icon name={n} size={10} /></PlainButton>
              ))}
            </DockTools>
            <BrowserBox>
              <Tree>
                {browserItems.map(([icon, text, closed]) => (
                  <TreeRow key={text}>
                    <Twist $kind={closed ? 'closed' : undefined} />
                    <Icon name={icon} size={9} />
                    {text}
                  </TreeRow>
                ))}
              </Tree>
              <ScrollBar><Tri $dir="up" /><Tri $dir="down" /></ScrollBar>
            </BrowserBox>
            <Splitter />
            <DockHeader name="Layers" />
            <DockTools $gap={4}>
              {['brush', 'addGroup', 'eye', 'filterDrop', 'expression', 'expand', 'collapse', 'removeLayer'].map((n) => (
                <React.Fragment key={n}>
                  <PlainButton aria-label={n}><Icon name={n} size={10} /></PlainButton>
                  {n === 'expression' && <Tri $dir="down" />}
                </React.Fragment>
              ))}
            </DockTools>
            <LayerBox>
              <Tree>
                <LayerRow $selected>
                  <Twist />
                  <Check defaultChecked aria-label="kailua_transects" />
                  <Icon name="line" size={8} />
                  kailua_transects.geojson
                </LayerRow>
                <LayerRow $bold>
                  <Twist $kind="open" />
                  <Check defaultChecked aria-label="20240102_201843" />
                  <Icon name="raster" size={8} />
                  20240102_201843
                </LayerRow>
                <BandRow><Swatch $color="#f00" />Band 3: red (Blue)</BandRow>
                <BandRow><Swatch $color="#0f0" />Band 2: green (Green)</BandRow>
                <BandRow><Swatch $color="#00f" />Band 1: blue (Red)</BandRow>
              </Tree>
            </LayerBox>
            <HScroll><Tri $dir="left" /></HScroll>
          </LeftDock>
          <MapCanvas><SatelliteMap /></MapCanvas>
          <RightDock>
            <RightTitle>Search</RightTitle>
            <SearchInput placeholder="Search" aria-label="Search" />
            <FilterButton>Filter</FilterButton>
            <ResultHead>Last</ResultHead>
            <ResultItem><Icon name="mapItem" size={12} /></ResultItem>
            <ResultSpace />
            <HScroll><Tri $dir="left" /></HScroll>
            <Notice><Icon name="bell" size={6} />E</Notice>
          </RightDock>
        </Body>
        <StatusBar>
          <Locator>
            <Icon name="search" size={8} />
            <LocatorInput placeholder="Type to locate (Ctrl+K)" aria-label="Type to locate" />
          </Locator>
          <StatusField $grow>
            Coordinate
            <ValueBox $w={56}><ValueInput defaultValue="630172,2367772" /></ValueBox>
          </StatusField>
          <StatusField>
            <Icon name="extents" size={8} />
          </StatusField>
          <StatusField>
            Scale
            <ValueBox $w={46}>
              <ScaleSelect defaultValue="1:9667"><option>1:9667</option></ScaleSelect>
              <Tri $dir="down" />
            </ValueBox>
          </StatusField>
          <StatusField><Icon name="lock" size={9} /></StatusField>
          <StatusField>
            Magnifier
            <ValueBox $w={48}>
              <ValueInput defaultValue="100%" />
              <Spinner><Tri $dir="up" /><Tri $dir="down" /></Spinner>
            </ValueBox>
          </StatusField>
          <StatusField>
            Rotation
            <ValueBox $w={49}>
              <ValueInput defaultValue="0.0 °" />
              <Spinner><Tri $dir="up" /><Tri $dir="down" /></Spinner>
            </ValueBox>
          </StatusField>
          <StatusField><Check defaultChecked />Render</StatusField>
        </StatusBar>
        <ContextMenu role="menu">
          {entries.map((e, i) =>
            e.text ? (
              <MenuEntry key={i} $spaced={e.open}>
                <MenuItem role="menuitem" disabled={e.off} $active={e.open}>
                  <IconCell $on={e.on}>{e.icon && <Icon name={e.icon} size={10} />}</IconCell>
                  <Mnemonic text={e.text} />
                  {e.sub && <Tri $dir="right" />}
                </MenuItem>
                {e.open && (
                  <SubMenu role="menu">
                    {exportEntries.map((s) => (
                      <MenuEntry key={s.text}>
                        <MenuItem role="menuitem" disabled={s.off} $active={s.open}>
                          <span />
                          <Mnemonic text={s.text || ''} />
                        </MenuItem>
                      </MenuEntry>
                    ))}
                  </SubMenu>
                )}
              </MenuEntry>
            ) : (
              <Rule key={i} role="separator" />
            ),
          )}
        </ContextMenu>
      </Qgis>
      <Editor>
        <Files>
          {files.map((f) => (
            <FileRow key={f} $active={f.startsWith('example')}>{f}</FileRow>
          ))}
        </Files>
        <Notebook>
          <Heading>Reference Shoreline</Heading>
          <Para>
            <Line>ity control a reference shoreline can be hand digitized. Then given <Code>max_dist_from_ref</Code></Line>
            <Line $indent={6}>to <Code>coastvision.CoastVisionRun()</Code> all extracted shoreline segments out of range</Line>
            <Line>ended but not neccesary.</Line>
          </Para>
          <Para>
            <Line $indent={121}><Code>inputs/&lt;region&gt;/&lt;sitename&gt;</Code> as <Code>&lt;sitename&gt;_transects</Code></Line>
            <Line $indent={121}><Code>on</Code>. See <Code><CodeLink href="#guide">How_to_create_transect_and_sl_ref_files</CodeLink></Code></Line>
          </Para>
        </Notebook>
      </Editor>
    </Desktop>
  );
}
